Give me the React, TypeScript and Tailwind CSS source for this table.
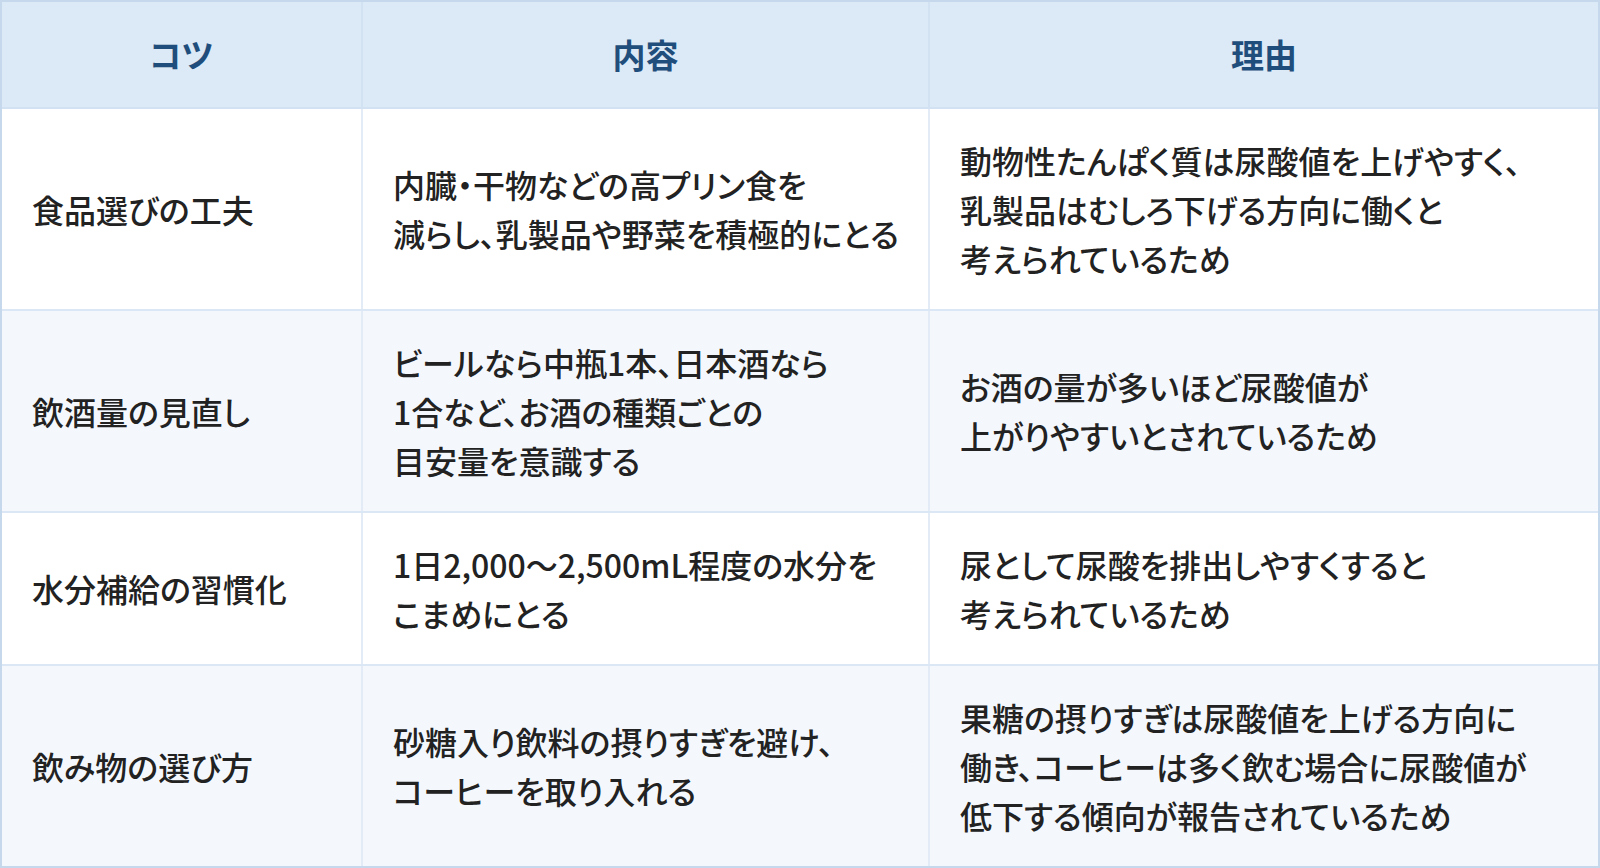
import React from "react";

const rows: { a: string; b: string[]; c: string[] }[] = [
  {
    a: "食品選びの工夫",
    b: ["内臓・干物などの高プリン食を", "減らし、乳製品や野菜を積極的にとる"],
    c: ["動物性たんぱく質は尿酸値を上げやすく、", "乳製品はむしろ下げる方向に働くと", "考えられているため"],
  },
  {
    a: "飲酒量の見直し",
    b: ["ビールなら中瓶1本、日本酒なら", "1合など、お酒の種類ごとの", "目安量を意識する"],
    c: ["お酒の量が多いほど尿酸値が", "上がりやすいとされているため"],
  },
  {
    a: "水分補給の習慣化",
    b: ["1日2,000〜2,500mL程度の水分を", "こまめにとる"],
    c: ["尿として尿酸を排出しやすくすると", "考えられているため"],
  },
  {
    a: "飲み物の選び方",
    b: ["砂糖入り飲料の摂りすぎを避け、", "コーヒーを取り入れる"],
    c: ["果糖の摂りすぎは尿酸値を上げる方向に", "働き、コーヒーは多く飲む場合に尿酸値が", "低下する傾向が報告されているため"],
  },
];

function Lines({ lines }: { lines: string[] }) {
  return (
    <>
      {lines.map((l, i) => (
        <div key={i} className="whitespace-nowrap">
          {l}
        </div>
      ))}
    </>
  );
}

export default function App() {
  return (
    <div
      className="w-[1600px] h-[868px] bg-white [font-feature-settings:'palt']"
      style={{ fontFamily: '"Noto Sans CJK JP", "Noto Sans", sans-serif' }}
    >
      <div className="border-2 border-[#c6d9ec] w-[1600px]">
        <div className="grid grid-cols-[361px_567px_668px] bg-[#dce9f6] border-b-2 border-[#d2e2f2] h-[107px] text-[#1f4e7c] font-bold text-[33px]">
          <div className="flex items-center justify-center border-r-2 border-[#d2e2f2]">コツ</div>
          <div className="flex items-center justify-center border-r-2 border-[#d2e2f2]">内容</div>
          <div className="flex items-center justify-center">理由</div>
        </div>
        {rows.map((r, i) => (
          <div
            key={i}
            className={`grid grid-cols-[361px_567px_668px] text-[#222222] font-medium text-[32px] leading-[49px] ${
              i % 2 === 1 ? "bg-[#f4f8fd]" : "bg-white"
            } ${i < rows.length - 1 ? "border-b-2 border-[#dbe7f4]" : ""}`}
          >
            <div className="flex items-center px-[30px] py-[26.5px] border-r-2 border-[#e3ecf6]">{r.a}</div>
            <div className="flex flex-col justify-center px-[30px] py-[26.5px] border-r-2 border-[#e3ecf6]">
              <Lines lines={r.b} />
            </div>
            <div className="flex flex-col justify-center px-[30px] py-[26.5px]">
              <Lines lines={r.c} />
            </div>
          </div>
        ))}
      </div>
    </div>
  );
}
